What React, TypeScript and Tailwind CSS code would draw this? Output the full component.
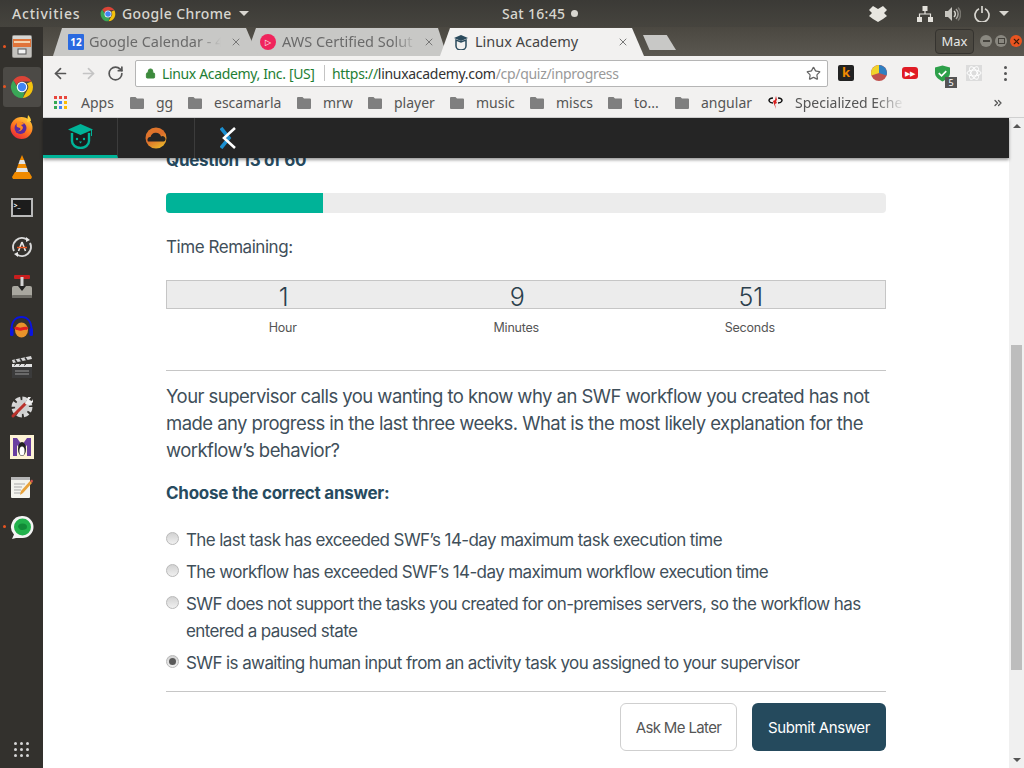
import React from "react";
import { ArrowLeft, ArrowRight, RotateCw, Star, Lock, X, ChevronsRight } from "lucide-react";

const ui = "font-['Noto_Sans',sans-serif]";

const ChromeIcon = ({ size = 18 }: { size?: number }) => (
  <svg width={size} height={size} viewBox="0 0 48 48" className="shrink-0">
    <path d="M24 2a22 22 0 0 1 19 11H24a11 11 0 0 0-10.500 7.500L6.600 10.600A22 22 0 0 1 24 2z" fill="#db4437" />
    <path d="M43 13a22 22 0 0 1-17.500 33l8.600-15A11 11 0 0 0 33.600 17z" fill="#f4c20d" />
    <path d="M6.600 10.600l8.700 15A11 11 0 0 0 29 34.300L25.500 46A22 22 0 0 1 6.600 10.600z" fill="#3aa757" />
    <circle cx="24" cy="24" r="10.500" fill="#fff" />
    <circle cx="24" cy="24" r="8.300" fill="#4285f4" />
  </svg>
);

const Folder = () => (
  <svg width="14" height="13" viewBox="0 0 14 13" className="shrink-0">
    <path d="M1 1h4.500l1.500 1.600h6a1 1 0 0 1 1 1V12a1 1 0 0 1-1 1H1a1 1 0 0 1-1-1V2a1 1 0 0 1 1-1z" fill="#7f7f7f" />
  </svg>
);

const Bookmark = ({ name, w }: { name: string; w: string }) => (
  <div className="flex items-center gap-[12px]">
    <Folder />
    <span className={`${w} whitespace-nowrap`}>{name}</span>
  </div>
);

const Radio = ({ checked }: { checked?: boolean }) => (
  <span className="mt-[5px] flex h-[13px] w-[13px] shrink-0 items-center justify-center rounded-full border border-[#b9b9b9] bg-gradient-to-b from-[#d2d2d2] to-[#f0f0f0]">
    {checked && <span className="h-[7px] w-[7px] rounded-full bg-[#595959]" />}
  </span>
);

const Option = ({ checked, children }: { checked?: boolean; children: React.ReactNode }) => (
  <div className="flex gap-[7px]">
    <Radio checked={checked} />
    <p className="leading-[27px]">{children}</p>
  </div>
);

const TimeCell = ({ v }: { v: string }) => (
  <div className="w-[233.5px] pt-[3px] text-center text-[25px] leading-[27px] font-light text-[#2b3f4c]">{v}</div>
);

const TimeLabel = ({ v }: { v: string }) => (
  <div className="w-[233.5px] text-center">{v}</div>
);

const DockSlot = ({ active, dot, children }: { active?: boolean; dot?: boolean; children: React.ReactNode }) => (
  <div className={`relative flex h-[40px] w-[38px] items-center justify-center rounded-[3px] ${active ? "bg-[#4c4a46]" : ""}`}>
    {dot && <span className="absolute -left-[0px] top-[18px] h-[3px] w-[3px] rounded-full bg-[#e95420]" />}
    {children}
  </div>
);

const Dock = () => (
  <div className="flex w-[43px] shrink-0 flex-col items-center bg-[#33312d]">
    <DockSlot dot>
      <svg width="22" height="24" viewBox="0 0 22 24">
        <rect x="1" y="0" width="20" height="23" rx="2" fill="#9d9b97" />
        <rect x="2" y="1" width="18" height="3" fill="#d6d6d4" />
        <rect x="2" y="4" width="18" height="8" fill="#e0743a" />
        <rect x="3" y="6" width="16" height="2" fill="#f4d3ad" />
        <rect x="2" y="12" width="18" height="10" fill="#c4c2be" />
        <rect x="7" y="14" width="8" height="5" fill="#f2f2f2" stroke="#555" strokeWidth="1" />
      </svg>
    </DockSlot>
    <DockSlot active dot>
      <ChromeIcon size={24} />
    </DockSlot>
    <DockSlot>
      <svg width="23" height="24" viewBox="0 0 23 24">
        <defs>
          <linearGradient id="fx" x1="0.8" y1="0" x2="0.2" y2="1">
            <stop offset="0" stopColor="#ffd03a" />
            <stop offset="0.5" stopColor="#ff7a1e" />
            <stop offset="1" stopColor="#e8213c" />
          </linearGradient>
        </defs>
        <circle cx="11.500" cy="13" r="11" fill="url(#fx)" />
        <path d="M18 0c2 2 3 4 3 6l-4 1z" fill="#ffd03a" />
        <circle cx="10.500" cy="13" r="6" fill="#5b2a9c" />
        <path d="M7 7c3-1 6 0 7 2l-3 1 2 2c0 3-3 5-6 4 3 0 4-2 3-3l-3-1c-1-2 0-4 0-5z" fill="#ff8a1e" />
      </svg>
    </DockSlot>
    <DockSlot>
      <svg width="20" height="24" viewBox="0 0 20 24">
        <path d="M10 0l2.200 5H7.800z" fill="#f08a00" />
        <path d="M7.800 5h4.400l1.400 4H6.400z" fill="#e2e2e2" />
        <path d="M6.400 9h7.200l1.400 4H5z" fill="#f08a00" />
        <path d="M5 13h10l1.200 4H3.800z" fill="#e2e2e2" />
        <path d="M3 17h14l3 5-1 2H1l-1-2z" fill="#f08a00" />
      </svg>
    </DockSlot>
    <DockSlot>
      <div className="flex h-[19px] w-[22px] items-start border-2 border-[#b9b9b9] bg-[#1c1c1c] pl-[1px] pt-[2px] text-[7px] leading-none font-bold text-white">
        &gt;_
      </div>
    </DockSlot>
    <DockSlot>
      <svg width="22" height="22" viewBox="0 0 22 22" fill="none">
        <path d="M3 15A9 9 0 0 1 16 3.500M19 7a9 9 0 0 1-13 11.500" stroke="#d8d8d8" strokeWidth="2" />
        <path d="M11 6l-3.500 9M11 6l3.500 9" stroke="#e8e8e8" strokeWidth="1.600" />
        <path d="M6 11.500h10" stroke="#e95420" strokeWidth="1.400" />
        <path d="M15 1l4 3-4 2zM7 21l-4-3 4-2z" fill="#e8e8e8" />
      </svg>
    </DockSlot>
    <DockSlot>
      <svg width="22" height="24" viewBox="0 0 22 24">
        <rect x="3" y="0" width="16" height="4" rx="1" fill="#c81e1e" />
        <rect x="9.500" y="2" width="3" height="10" fill="#d4d4d4" />
        <rect x="1" y="11" width="20" height="12" rx="2" fill="#a9a79f" />
        <rect x="1" y="20" width="20" height="3" rx="1" fill="#6f6d67" />
        <path d="M7 11h8l-4 5z" fill="#222" />
      </svg>
    </DockSlot>
    <DockSlot>
      <svg width="25" height="24" viewBox="0 0 25 24" fill="none">
        <ellipse cx="12.500" cy="15" rx="6.500" ry="7.500" fill="#e8932a" />
        <path d="M6 14c2-2 3 1 6.500 0s5-1 6 0" stroke="#e02020" strokeWidth="3" />
        <path d="M2.500 15C2.500 6 7 2 12.500 2s10 4 10 13" stroke="#0a14e0" strokeWidth="2" />
        <rect x="1" y="13" width="3.500" height="8" rx="1.500" fill="#0a14e0" />
        <rect x="20.500" y="13" width="3.500" height="8" rx="1.500" fill="#0a14e0" />
      </svg>
    </DockSlot>
    <DockSlot>
      <svg width="22" height="24" viewBox="0 0 22 24">
        <path d="M1 5l19-4 1 3L2 8z" fill="#d8d8d8" />
        <path d="M4 4.500l2 3M9 3.500l2 3M14 2.500l2 3" stroke="#333" strokeWidth="1.500" />
        <rect x="1" y="9" width="20" height="14" fill="#3b3b3b" />
        <path d="M1 9h20v3H1z" fill="#e2e2e2" />
        <path d="M3 10.500l2-1.500M8 10.500l2-1.500M13 10.500l2-1.500" stroke="#333" strokeWidth="1" />
        <path d="M4 16h14M4 19h14" stroke="#9a9a9a" strokeWidth="1" />
      </svg>
    </DockSlot>
    <DockSlot>
      <svg width="24" height="24" viewBox="0 0 24 24">
        <circle cx="12" cy="12" r="8" fill="none" stroke="#d8d8d8" strokeWidth="5" strokeDasharray="4.500 1.800" />
        <circle cx="12" cy="12" r="7" fill="#cfcfcf" />
        <path d="M3 21L15 9" stroke="#b9322c" strokeWidth="3" strokeLinecap="round" />
        <path d="M15 9l3-7 3 0-2 3 3 1 1-2 0 3-3 3z" fill="#efefef" />
      </svg>
    </DockSlot>
    <DockSlot>
      <svg width="24" height="24" viewBox="0 0 24 24">
        <rect width="24" height="24" fill="#fdf3d4" />
        <path d="M3 3h4l5 7 5-7h4v18h-4V10l-5 6-5-6v11H3z" fill="#6a3fa0" />
        <ellipse cx="12" cy="14" rx="4" ry="7" fill="#222" />
        <ellipse cx="12" cy="16" rx="2.600" ry="4.500" fill="#fff" />
      </svg>
    </DockSlot>
    <DockSlot>
      <svg width="24" height="24" viewBox="0 0 24 24">
        <rect x="1" y="2" width="19" height="21" rx="1" fill="#f4f4ee" />
        <path d="M1 2h19v3H1z" fill="#b5b5b5" />
        <path d="M4 9h11M4 12h8M4 15h7M4 18h8" stroke="#a9a9a9" strokeWidth="1" />
        <path d="M10 20l1-4 9-10 2 2-9 10z" fill="#e8a23a" />
        <path d="M20 6l2 2 1-2-1-1.500z" fill="#d9534f" />
      </svg>
    </DockSlot>
    <DockSlot dot>
      <svg width="24" height="24" viewBox="0 0 24 24">
        <path d="M12.500 1a11 11 0 0 1 0 22H6l-4 1 2-4.500A11 11 0 0 1 12.500 1z" fill="#f4f4f4" />
        <circle cx="12.500" cy="12" r="8.500" fill="#22b14c" />
        <path d="M8 12a4.500 3.500 0 0 1 9 0c0 2-2.500 3-4.500 3-1 0-2 0-2.500-.500z" fill="#128a38" />
      </svg>
    </DockSlot>
    <div className="mt-auto mb-[11px] grid grid-cols-3 gap-[3px]">
      {Array.from({ length: 9 }).map((_, i) => (
        <span key={i} className="h-[3px] w-[3px] rounded-full bg-[#d6d6d6]" />
      ))}
    </div>
  </div>
);

const TopBar = () => (
  <div className={`flex h-[27px] shrink-0 items-center bg-gradient-to-b from-[#3b3a36] to-[#46443e] text-[14px] font-medium text-[#d8d6d0] ${ui}`}>
    <span className="ml-[12px] w-[88px] tracking-[0.8px]">Activities</span>
    <ChromeIcon size={16} />
    <span className="ml-[6px] w-[110px] whitespace-nowrap tracking-[0.4px]">Google Chrome</span>
    <span className="ml-[7px] h-0 w-0 border-x-[5px] border-t-[5px] border-x-transparent border-t-[#d8d6d0]" />
    <div className="ml-[253px] flex items-center gap-[5px] tracking-[0.3px]">
      <span className="w-[64px] whitespace-nowrap">Sat 16:45</span>
      <span className="h-[7px] w-[7px] rounded-full bg-[#d8d6d0]" />
    </div>
    <svg width="18" height="17" viewBox="0 0 18 17" className="ml-[291px]">
      <path d="M4 1l5 3 5-3 4 4-3 3 3 3-4 3-5 3-5-3-4-3 3-3-3-3z" fill="#e8e6e0" />
    </svg>
    <svg width="16" height="16" viewBox="0 0 16 16" className="ml-[30px]">
      <path d="M5.500 0h5v5h-5zM0 11h5v5H0zM11 11h5v5h-5z" fill="#e4e2dc" />
      <path d="M8 5v3M2.500 11V8h11v3" fill="none" stroke="#e4e2dc" strokeWidth="1.200" />
    </svg>
    <svg width="16" height="16" viewBox="0 0 16 16" className="ml-[12px]" fill="none">
      <path d="M0 5h3l4-4v14l-4-4H0z" fill="#c8c6c0" />
      <path d="M9 5a4 4 0 0 1 0 6" stroke="#d8d6d0" strokeWidth="1.500" />
      <path d="M11 3a7 7 0 0 1 0 10" stroke="#a8a6a0" strokeWidth="1.500" />
      <path d="M13 1.500a9.500 9.500 0 0 1 0 13" stroke="#77756f" strokeWidth="1.500" />
    </svg>
    <svg width="16" height="16" viewBox="0 0 16 16" className="ml-[13px]" fill="none">
      <path d="M5 2.800a7 7 0 1 0 6 0" stroke="#d8d6d0" strokeWidth="1.700" />
      <path d="M8 0v7" stroke="#d8d6d0" strokeWidth="1.700" />
    </svg>
    <span className="ml-[9px] h-0 w-0 border-x-[5px] border-t-[5px] border-x-transparent border-t-[#d8d6d0]" />
  </div>
);

const TabStrip = () => (
  <div className={`relative flex h-[29px] shrink-0 bg-gradient-to-b from-[#4b4841] to-[#5a5750] pl-[10px] pt-[1px] text-[14.5px] ${ui}`}>
    <div className="relative z-20 flex w-[205px] items-center bg-[#c8c8c6] pl-[15px] text-[#6a6a6a] [clip-path:polygon(9px_0,193px_0,205px_100%,0_100%)]">
      <span className="flex h-[16px] w-[16px] items-center justify-center rounded-[1px] bg-[#2a6ae0] text-[10px] font-bold text-white">12</span>
      <span className="ml-[5px] w-[132px] whitespace-nowrap overflow-hidden [mask-image:linear-gradient(to_right,black_82%,transparent)]">Google Calendar - 4</span>
      <X size={12} className="ml-[9px] text-[#777]" />
    </div>
    <div className="relative z-10 -ml-[12px] flex w-[201px] items-center bg-[#c8c8c6] pl-[14px] text-[#6a6a6a] [clip-path:polygon(10px_0,192px_0,201px_100%,0_100%)]">
      <span className="flex h-[16px] w-[16px] items-center justify-center rounded-full bg-[#f0245c] text-[8px] text-white">▷</span>
      <span className="ml-[6px] w-[135px] whitespace-nowrap overflow-hidden [mask-image:linear-gradient(to_right,black_82%,transparent)]">AWS Certified Solut</span>
      <X size={12} className="ml-[6px] text-[#777]" />
    </div>
    <div className="relative z-30 -ml-[7px] flex w-[204px] items-center bg-[#f2f1f0] pl-[13px] text-[#444] [clip-path:polygon(10px_0,192px_0,204px_100%,0_100%)]">
      <svg width="16" height="16" viewBox="0 0 16 16">
        <path d="M8 1L1 4l7 3 7-3z" fill="#2a4a5c" />
        <path d="M3 6v6a5 4 0 0 0 10 0V6l-5 2z" fill="none" stroke="#2a4a5c" strokeWidth="1.500" />
      </svg>
      <span className="ml-[6px] w-[142px] whitespace-nowrap">Linux Academy</span>
      <X size={12} className="text-[#777]" />
    </div>
    <div className="mt-[7px] -ml-[1px] h-[15px] w-[33px] bg-[#c8c8c6] [clip-path:polygon(0_0,72%_0,100%_100%,20%_100%)]" />
    <div className="ml-[259px] mt-[1px] flex h-[25px] w-[39px] items-center justify-center rounded-[4px] border border-[#35332f] bg-[#4b4841] text-[13px] text-[#e8e8e8]">
      Max
    </div>
    <div className="ml-[6px] mt-[7px] flex gap-[3px]">
      <span className="flex h-[12px] w-[12px] items-center justify-center rounded-full bg-[#8a8880]"><span className="h-[2px] w-[7px] bg-[#44423c]" /></span>
      <span className="flex h-[12px] w-[12px] items-center justify-center rounded-full bg-[#8a8880]"><span className="h-[6px] w-[7px] border border-[#44423c]" /></span>
      <span className="flex h-[12px] w-[12px] items-center justify-center rounded-full bg-[#e95420] text-[#3a1a0a]"><X size={9} strokeWidth={3} /></span>
    </div>
  </div>
);

const Toolbar = () => (
  <div className={`flex h-[32px] shrink-0 items-center bg-[#f2f1f0] pt-[2px] text-[14px] tracking-[-0.3px] ${ui}`}>
    <ArrowLeft size={17} strokeWidth={2.4} className="ml-[9px] text-[#555]" />
    <ArrowRight size={17} strokeWidth={2.4} className="ml-[11px] text-[#c4c4c4]" />
    <RotateCw size={17} strokeWidth={2.4} className="ml-[10px] text-[#555]" />
    <div className="ml-[11px] flex h-[27px] w-[693px] items-center rounded-[2px] border border-[#b5b5b5] bg-white pl-[9px]">
      <Lock size={11} className="text-[#3c8a3c]" fill="#3c8a3c" />
      <span className="ml-[6px] w-[152px] whitespace-nowrap tracking-[-0.35px] text-[#1e7e34]">Linux Academy, Inc. [US]</span>
      <span className="ml-[10px] h-[16px] w-px bg-[#c4c4c4]" />
      <span className="ml-[7px] whitespace-nowrap"><span className="text-[#1e7e34]">https://</span><span className="text-[#333]">linuxacademy.com</span><span className="text-[#999]">/cp/quiz/inprogress</span></span>
      <Star size={15} className="ml-auto mr-[6px] text-[#666]" />
    </div>
    <div className="ml-[10px] flex h-[16px] w-[16px] items-center justify-center rounded-[2px] bg-[#222] text-[13px] font-bold text-[#f08a00]">k</div>
    <svg width="16" height="16" viewBox="0 0 16 16" className="ml-[17px]">
      <circle cx="8" cy="8" r="8" fill="#c0504d" />
      <path d="M8 8V0a8 8 0 0 1 7.500 10.500z" fill="#2f7fc1" />
      <path d="M8 8V0a8 8 0 0 0-7.500 10.500z" fill="#f1d32a" />
    </svg>
    <div className="ml-[15px] flex h-[12px] w-[16px] items-center justify-center rounded-[3px] bg-[#e01b24] text-[7px] leading-none text-white">▶▶</div>
    <div className="relative ml-[17px] h-[16px] w-[15px]">
      <svg width="15" height="17" viewBox="0 0 16 17">
        <path d="M8 0l8 2v6c0 4-4 7-8 9-4-2-8-5-8-9V2z" fill="#2ea04a" />
        <path d="M4 8l3 3 5-5" fill="none" stroke="#fff" strokeWidth="1.800" />
      </svg>
      <span className="absolute -bottom-[7px] left-[10px] flex h-[11px] w-[12px] items-center justify-center bg-[#555] text-[9px] leading-none tracking-normal text-white">5</span>
    </div>
    <svg width="16" height="16" viewBox="0 0 16 16" className="ml-[16px]">
      <rect width="16" height="16" fill="#dcdcdc" />
      <g fill="none" stroke="#fff" strokeWidth="1">
        <ellipse cx="8" cy="8" rx="7" ry="3" />
        <ellipse cx="8" cy="8" rx="7" ry="3" transform="rotate(60 8 8)" />
        <ellipse cx="8" cy="8" rx="7" ry="3" transform="rotate(120 8 8)" />
      </g>
    </svg>
    <div className="ml-[22px] flex flex-col gap-[3px]">
      <span className="h-[3px] w-[3px] rounded-full bg-[#555]" />
      <span className="h-[3px] w-[3px] rounded-full bg-[#555]" />
      <span className="h-[3px] w-[3px] rounded-full bg-[#555]" />
    </div>
  </div>
);

const Bookmarks = () => (
  <div className={`flex h-[30px] shrink-0 items-center gap-[14px] border-b border-[#d0d0d0] bg-[#f2f1f0] text-[14px] text-[#555] ${ui}`}>
    <div className="ml-[11px] grid grid-cols-3 gap-[2px]">
      {["bg-[#e8453c]","bg-[#e8453c]","bg-[#e8453c]","bg-[#34a853]","bg-[#4285f4]","bg-[#fbbc05]","bg-[#34a853]","bg-[#4285f4]","bg-[#fbbc05]"].map((c, i) => (
        <span key={i} className={`h-[3px] w-[3px] ${c}`} />
      ))}
    </div>
    <span className="w-[35px]">Apps</span>
    <Bookmark name="gg" w="w-[18px]" />
    <Bookmark name="escamarla" w="w-[69px]" />
    <Bookmark name="mrw" w="w-[31px]" />
    <Bookmark name="player" w="w-[42px]" />
    <Bookmark name="music" w="w-[40px]" />
    <Bookmark name="miscs" w="w-[38px]" />
    <Bookmark name="to..." w="w-[27px]" />
    <Bookmark name="angular" w="w-[53px]" />
    <div className="flex items-center gap-[12px]">
      <svg width="15" height="15" viewBox="0 0 15 15" fill="none">
        <path d="M1 6c0-2 2-3 4-3M14 6c0-2-2-3-4-3M1 6c1 2 3 2 4 2M14 6c-1 2-3 2-4 2" stroke="#111" strokeWidth="1.500" />
        <path d="M8 1l1 4-1 1 1 2-2 1 1 5-2-5-1-3 2-1z" fill="#d81e1e" />
      </svg>
      <span className="w-[110px] whitespace-nowrap overflow-hidden [mask-image:linear-gradient(to_right,black_72%,transparent)]">Specialized Eche</span>
    </div>
    <ChevronsRight size={12} strokeWidth={2.6} className="ml-[73px] text-[#555]" />
  </div>
);

const AppNav = () => (
  <div className="relative z-10 flex h-[40px] shrink-0 bg-[#252525] shadow-[0_2px_3px_rgba(0,0,0,0.4)]">
    <div className="flex w-[75px] items-center justify-center border-r border-b-[3px] border-r-[#3c3c3c] border-b-[#00b398]">
      <svg width="25" height="25" viewBox="0 0 25 25" fill="none">
        <path d="M4 9v8c0 4 4 7 8.500 7s8.500-3 8.500-7V9" fill="#1c1c1c" stroke="#00b398" strokeWidth="2.400" />
        <path d="M12.500 0L0 5.500 12.500 11 25 5.500z" fill="#00b398" />
        <path d="M23.500 6v6" stroke="#00b398" strokeWidth="1" />
        <circle cx="9" cy="15" r="1.200" fill="#00b398" />
        <circle cx="16" cy="15" r="1.200" fill="#00b398" />
        <path d="M11 17.500l1.500 2 1.500-2z" fill="#00b398" />
      </svg>
    </div>
    <div className="flex w-[77px] items-center justify-center border-r border-[#3c3c3c]">
      <svg width="22" height="22" viewBox="0 0 22 22">
        <defs>
          <linearGradient id="cl" x1="0" y1="0" x2="0.6" y2="1">
            <stop offset="0" stopColor="#e0782a" />
            <stop offset="0.55" stopColor="#dd6f2c" />
            <stop offset="1" stopColor="#eab02a" />
          </linearGradient>
        </defs>
        <circle cx="11" cy="11" r="10.500" fill="url(#cl)" />
        <path d="M3 14.500a2.800 2.800 0 0 1 2.500-4.500 5.500 5.500 0 0 1 10.500-.5 2.800 2.800 0 0 1 3 5z" fill="#252525" />
      </svg>
    </div>
    <div className="flex w-[65px] items-center justify-center">
      <svg width="16" height="22" viewBox="0 0 16 22" fill="none">
        <path d="M1 1l8 10-8 10" stroke="#1b8fd0" strokeWidth="3.600" />
        <path d="M15 1L4 11l11 10" stroke="#fff" strokeWidth="2.600" />
      </svg>
    </div>
  </div>
);

const Scrollbar = () => (
  <div className="flex w-[15px] shrink-0 flex-col items-center bg-[#f0f0f0]">
    <span className="mt-[6px] h-0 w-0 border-x-[4px] border-b-[4px] border-x-transparent border-b-[#555]" />
    <div className="mt-[217px] h-[325px] w-[11px] bg-[#bdbdbd]" />
    <span className="mt-auto mb-[6px] h-0 w-0 border-x-[4px] border-t-[4px] border-x-transparent border-t-[#555]" />
  </div>
);

const Quiz = () => (
  <div className="min-w-0 flex-1 overflow-hidden bg-white font-['Inter',sans-serif] text-[#3f4f5a]">
    <div className="mx-auto -mt-[8px] w-[720px]">
      <div className="text-[17px] font-bold leading-[20px] tracking-[-0.3px] text-[#274b5f]">Question 13 of 60</div>
      <div className="mt-[23px] flex h-[20px] overflow-hidden rounded-[4px] bg-[#ececec]">
        <div className="w-[157px] bg-[#00b398]" />
      </div>
      <div className="mt-[23px] text-[17px] leading-[22px] tracking-[-0.45px]">Time Remaining:</div>
      <div className="mt-[22px] flex h-[29px] border border-[#c6c6c6] bg-[#ececec]">
        <TimeCell v="1" />
        <TimeCell v="9" />
        <TimeCell v="51" />
      </div>
      <div className="mt-[11px] flex text-[12.5px] leading-[16px] tracking-[-0.2px] text-[#555]">
        <TimeLabel v="Hour" />
        <TimeLabel v="Minutes" />
        <TimeLabel v="Seconds" />
      </div>
      <hr className="mt-[34px] border-[#c6c6c6]" />
      <p className="mt-[12px] text-[18.5px] leading-[27px] tracking-[-0.55px]">
        Your supervisor calls you wanting to know why an SWF workflow you created has not made any progress in the last three weeks. What is the most likely explanation for the workflow’s behavior?
      </p>
      <div className="mt-[17px] text-[17px] font-bold leading-[24px] tracking-[-0.25px] text-[#274b5f]">Choose the correct answer:</div>
      <div className="mt-[22px] flex flex-col gap-[5px] text-[17px] tracking-[-0.6px]">
        <Option>The last task has exceeded SWF’s 14-day maximum task execution time</Option>
        <Option>The workflow has exceeded SWF’s 14-day maximum workflow execution time</Option>
        <Option>SWF does not support the tasks you created for on-premises servers, so the workflow has entered a paused state</Option>
        <Option checked>SWF is awaiting human input from an activity task you assigned to your supervisor</Option>
      </div>
      <hr className="mt-[14px] border-[#c6c6c6]" />
      <div className="mt-[11px] flex justify-end gap-[15px] text-[15px]">
        <button className="h-[48px] w-[117px] rounded-[6px] border border-[#cfcfcf] bg-white pt-[2px] tracking-[-0.65px] text-[#555]">Ask Me Later</button>
        <button className="h-[48px] w-[134px] rounded-[6px] bg-[#254a5d] pt-[2px] tracking-[-0.4px] text-white">Submit Answer</button>
      </div>
    </div>
  </div>
);

export default function App() {
  return (
    <div className="flex h-[768px] w-[1024px] flex-col overflow-hidden">
      <TopBar />
      <div className="flex min-h-0 flex-1">
        <Dock />
        <div className="flex min-w-0 flex-1 flex-col">
          <TabStrip />
          <Toolbar />
          <Bookmarks />
          <div className="relative flex min-h-0 flex-1">
            <div className="flex min-w-0 flex-1 flex-col">
              <AppNav />
              <Quiz />
            </div>
            <Scrollbar />
          </div>
        </div>
      </div>
    </div>
  );
}
